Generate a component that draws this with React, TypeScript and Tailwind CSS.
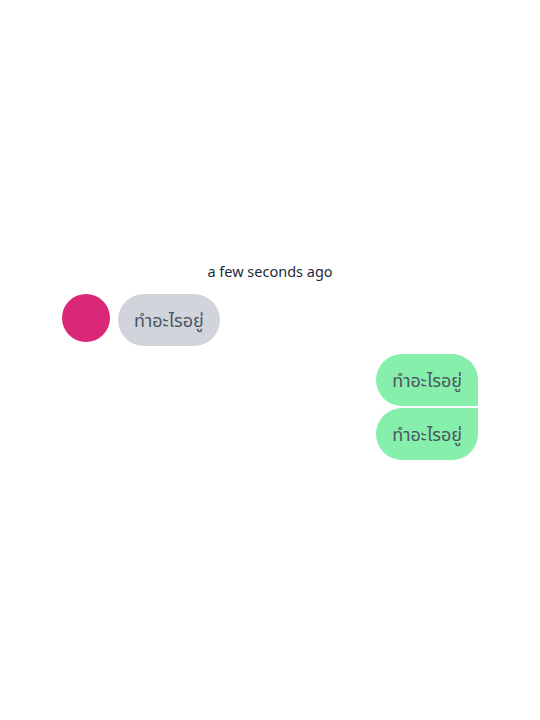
export default function App() {
  return (
    <main
      className="min-h-screen flex flex-col justify-center bg-white px-[62px] pt-px"
      style={{ fontFamily: '"Noto Sans", "Noto Sans Thai", sans-serif' }}
    >
      <div className="flex flex-col">
        <p className="text-center text-[14.5px] leading-5 text-gray-800 mb-[13px]">a few seconds ago</p>

        {/* incoming */}
        <div className="flex items-start gap-2">
          <div className="w-12 h-12 rounded-full bg-[#db2777] shrink-0" />
          <div className="bg-[#d1d5db] text-[#4b5563] rounded-[26px] px-4 py-3.5 text-lg leading-6">
            ทำอะไรอยู่
          </div>
        </div>

        {/* outgoing */}
        <div className="flex flex-col items-end gap-0.5 mt-2">
          <div className="bg-[#86efac] text-[#4b5563] rounded-[26px] rounded-br-none px-4 py-3.5 text-lg leading-6">
            ทำอะไรอยู่
          </div>
          <div className="bg-[#86efac] text-[#4b5563] rounded-[26px] rounded-tr-none px-4 py-3.5 text-lg leading-6">
            ทำอะไรอยู่
          </div>
        </div>
      </div>
    </main>
  );
}
